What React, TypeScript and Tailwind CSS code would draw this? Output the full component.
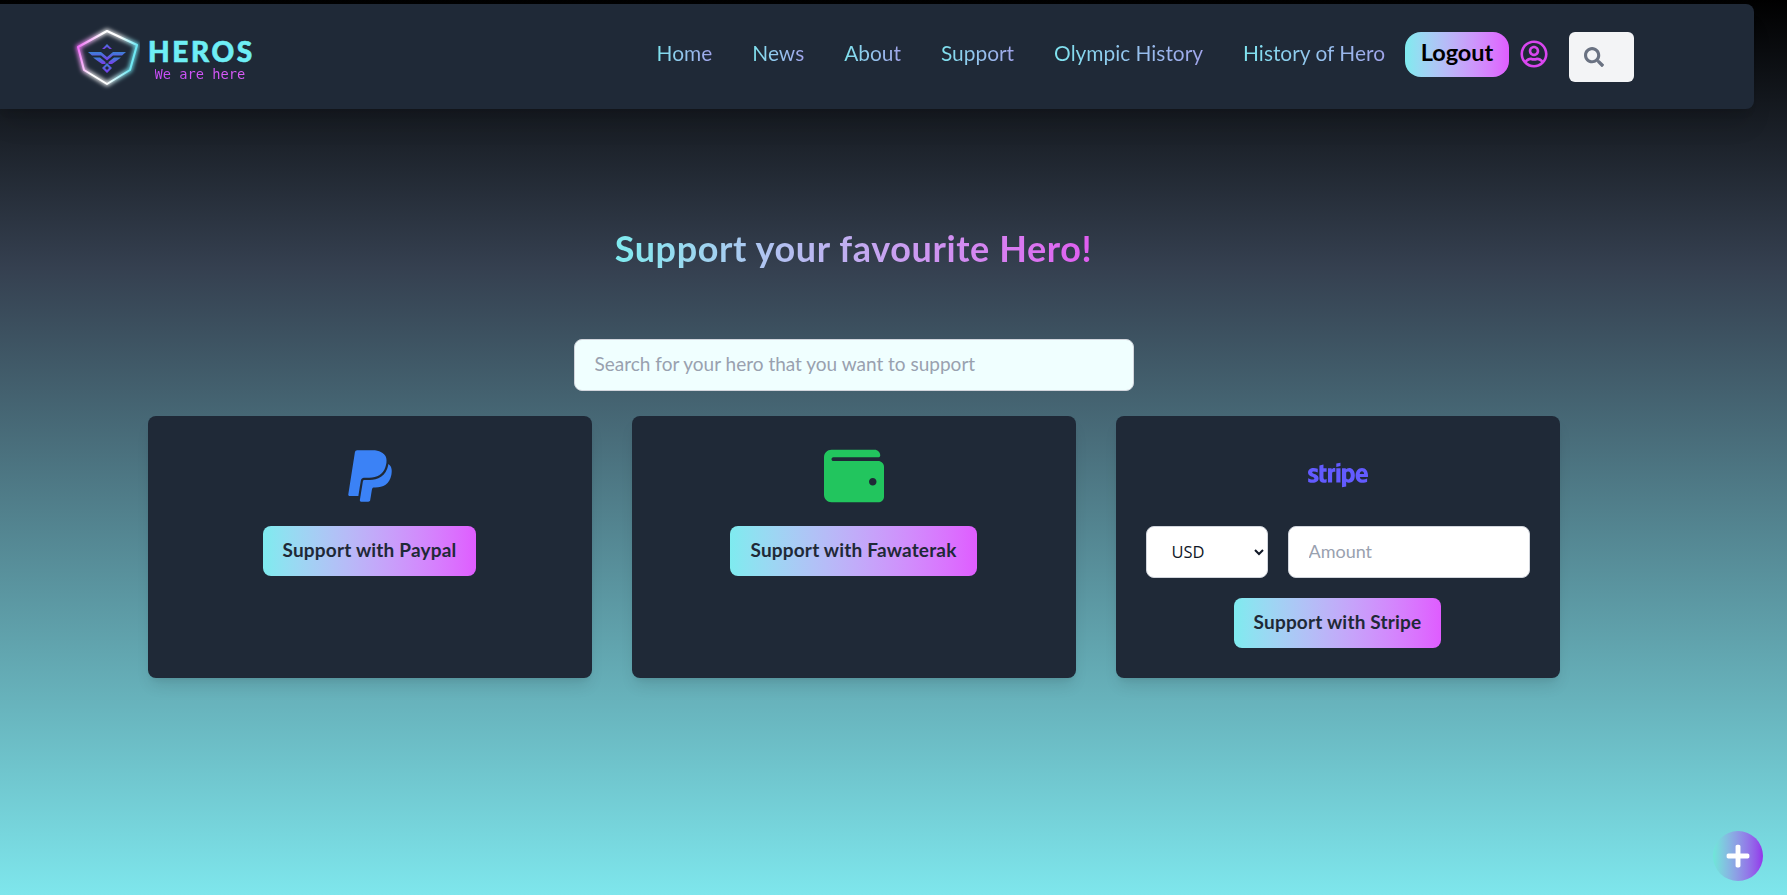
import { FaPaypal, FaWallet, FaStripe, FaSearch, FaRegUserCircle, FaPlus } from "react-icons/fa";

const links = ["Home", "News", "About", "Support", "Olympic History", "History of Hero"];

const btn =
  "rounded-lg bg-gradient-to-r from-[#7eebef] to-[#df5cff] h-[50px] px-5 pb-[2px] text-[19px] tracking-[0.19px] font-bold text-[#1f2937]";

const Logo = () => {
  return (
    <svg width="70" height="70" viewBox="0 0 70 70" className="shrink-0">
      <defs>
        <linearGradient id="ring" x1="0" y1="0" x2="1" y2="0.25">
          <stop offset="0" stopColor="#ec4ff5" />
          <stop offset="0.4" stopColor="#ffffff" />
          <stop offset="0.7" stopColor="#ffffff" />
          <stop offset="1" stopColor="#6fe9f5" />
        </linearGradient>
        <linearGradient id="bird" x1="0" y1="0" x2="0" y2="1">
          <stop offset="0" stopColor="#3b82d6" />
          <stop offset="1" stopColor="#7c3aed" />
        </linearGradient>
        <filter id="glow" x="-30%" y="-30%" width="160%" height="160%">
          <feGaussianBlur stdDeviation="2" />
        </filter>
      </defs>
      <path d="M37 9 L67 23 L60 48 L37 62 L14 48 L8 25 Z" fill="none" stroke="url(#ring)" strokeWidth="4" filter="url(#glow)" />
      <path d="M37 9 L67 23 L60 48 L37 62 L14 48 L8 25 Z" fill="none" stroke="url(#ring)" strokeWidth="2" strokeLinejoin="round" />
      <g fill="url(#bird)">
        <path d="M37 22 L42 27 L39.5 27 L37 25 L34.5 27 L32 27 Z" />
        <path d="M18 30 L31 30 L37 35 L43 30 L56 30 L52 33.5 L43 33.5 L37 38.5 L31 33.5 L22 33.5 Z" />
        <path d="M23 35.5 L30 35.5 L35.5 40 L35.5 42 L32 42 L27 38.5 Z" />
        <path d="M51 35.5 L44 35.5 L38.5 40 L38.5 42 L42 42 L47 38.5 Z" />
        <path d="M37 41 L42 46 L37 51 L32 46 Z M37 44 L35 46 L37 48 L39 46 Z" fillRule="evenodd" />
      </g>
    </svg>
  );
};

const App = () => {
  return (
    <div className="relative h-[895px] overflow-hidden bg-[linear-gradient(to_bottom,#000000_0%,#354050_30%,#7ee6ec_100%)] pt-[4px] font-['Lato',sans-serif]">
      <nav className="flex h-[105px] w-[1754px] items-center justify-between rounded-r-lg bg-[#1f2937] pl-[70px] pr-[120px] shadow-xl">
        <div className="flex items-center gap-2">
          <Logo />
          <div className="mt-[7px] flex flex-col items-center">
            <span className="text-[28px] font-black leading-[24px] tracking-[2.6px] text-[#6eeef5] [-webkit-text-stroke:0.6px_#6eeef5]">
              HEROS
            </span>
            <span className="mr-[3px] mt-[3px] bg-gradient-to-r from-[#c84df8] to-[#dc5cf8] bg-clip-text font-['DejaVu_Sans_Mono',monospace] text-[13.7px] leading-[16px] text-transparent">
              We are here
            </span>
          </div>
        </div>
        <div className="flex items-center">
          <ul className="mb-[7px] flex items-center gap-10 text-[20.9px]">
            {links.map((l) => (
              <li key={l} className="bg-gradient-to-r from-[#7ee3ef] to-[#a0a4ea] bg-clip-text text-transparent">
                {l}
              </li>
            ))}
          </ul>
          <button className="mb-[5px] ml-[20px] h-[45px] w-[104px] rounded-2xl bg-gradient-to-r from-[#7eebef] to-[#df5cff] pb-[2px] text-[23.5px] font-bold text-black">
            Logout
          </button>
          <FaRegUserCircle className="mb-[5px] ml-[11px] text-[#d946ef]" size={28} />
          <div className="ml-[21px] flex h-[50px] w-[65px] items-center rounded-md bg-gray-100 pl-[15px]">
            <FaSearch className="text-gray-500" size={20} />
          </div>
        </div>
      </nav>

      <main className="w-[1707px]">
        <h1 className="mx-auto mt-[117px] w-fit bg-gradient-to-r from-[#7eebef] to-[#e05cf0] bg-clip-text text-center text-[36px] font-bold leading-[44px] tracking-[0.6px] text-transparent">
          Support your favourite Hero!
        </h1>

        <input
          placeholder="Search for your hero that you want to support"
          className="mx-auto mt-[69px] block h-[52px] w-[560px] rounded-lg border border-gray-300 bg-[#f0ffff] px-5 pb-[3px] text-[19px] placeholder:text-gray-400"
        />

        <div className="mx-auto mt-[25px] grid w-[1412px] grid-cols-3 gap-10">
          <div className="flex h-[262px] flex-col items-center rounded-lg bg-[#1f2937] pt-[31px] shadow-lg">
            <FaPaypal className="text-[#3b82f6]" size={58} />
            <button className={`${btn} mt-[21px]`}>Support with Paypal</button>
          </div>
          <div className="flex h-[262px] flex-col items-center rounded-lg bg-[#1f2937] pt-[30px] shadow-lg">
            <FaWallet className="text-[#22c55e]" size={60} />
            <button className={`${btn} mt-5`}>Support with Fawaterak</button>
          </div>
          <div className="flex h-[262px] flex-col items-center rounded-lg bg-[#1f2937] px-[30px] pt-[29px] shadow-lg">
            <FaStripe className="text-[#635bff]" size={60} />
            <div className="mt-[21px] flex w-full gap-5">
              <select className="h-[52px] w-[122px] rounded-lg border border-gray-300 bg-white pb-[2px] pl-[21px] pr-[8px] font-['Open_Sans',sans-serif] text-[16.5px] text-[#111827]">
                <option>USD</option>
              </select>
              <input
                placeholder="Amount"
                className="h-[52px] min-w-0 flex-1 rounded-lg border border-gray-300 bg-white px-5 pb-[2px] text-[18px] placeholder:text-gray-400"
              />
            </div>
            <button className={`${btn} mt-5`}>Support with Stripe</button>
          </div>
        </div>
      </main>

      <button className="absolute left-[1713px] top-[831px] flex h-[50px] w-[50px] items-center justify-center rounded-full bg-gradient-to-r from-[#6ee7d8] to-[#9333ea] text-white">
        <FaPlus size={26} />
      </button>
    </div>
  );
};

export default App;
